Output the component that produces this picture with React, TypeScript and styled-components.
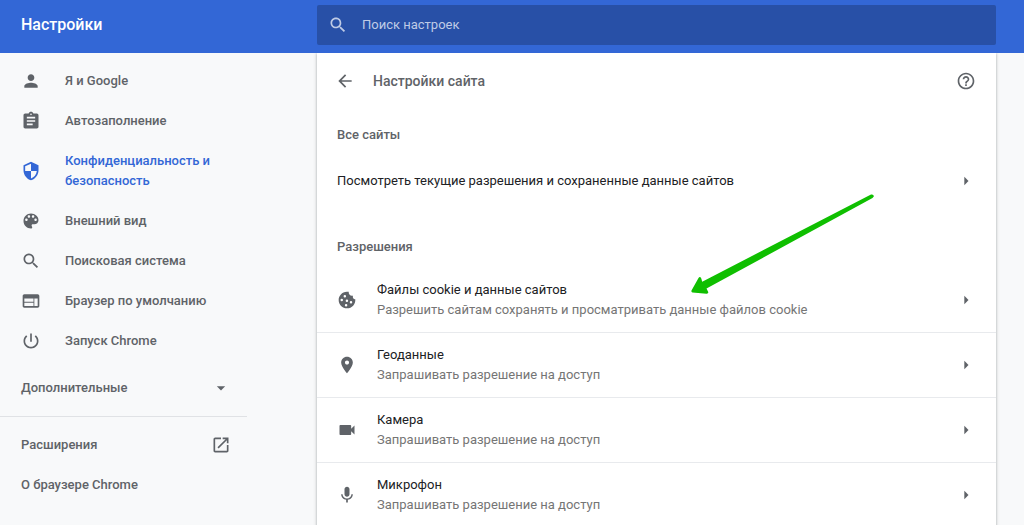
import React from "react";
import styled, { createGlobalStyle } from "styled-components";

const GlobalStyle = createGlobalStyle`
  *, *::before, *::after { box-sizing: border-box; }
  body {
    margin: 0;
    background: #f8f9fa;
    color: #202124;
    font-family: Roboto, "Liberation Sans", sans-serif;
    font-size: 13px;
    line-height: 20px;
  }
  h1, h2, p, ul { margin: 0; padding: 0; }
  ul { list-style: none; }
  button { border: 0; padding: 0; background: none; font: inherit; color: inherit; text-align: left; cursor: pointer; }
  a { color: inherit; text-decoration: none; }
`;

const icons = {
  person:
    "M12 12c2.21 0 4-1.79 4-4s-1.79-4-4-4-4 1.79-4 4 1.79 4 4 4zm0 2c-2.67 0-8 1.34-8 4v2h16v-2c0-2.66-5.33-4-8-4z",
  assignment:
    "M19 3h-4.18C14.4 1.84 13.3 1 12 1c-1.3 0-2.4.84-2.82 2H5c-1.1 0-2 .9-2 2v14c0 1.1.9 2 2 2h14c1.1 0 2-.9 2-2V5c0-1.1-.9-2-2-2zm-7 0c.55 0 1 .45 1 1s-.45 1-1 1-1-.45-1-1 .45-1 1-1zm2 14H7v-2h7v2zm3-4H7v-2h10v2zm0-4H7V7h10v2z",
  security:
    "M12 1L3 5v6c0 5.55 3.84 10.74 9 12 5.16-1.26 9-6.45 9-12V5l-9-4zm0 10.99h7c-.53 4.12-3.28 7.79-7 8.94V12H5V6.3l7-3.11v8.8z",
  palette:
    "M12 3c-4.97 0-9 4.03-9 9s4.03 9 9 9c.83 0 1.5-.67 1.5-1.5 0-.39-.15-.74-.39-1.01-.23-.26-.38-.61-.38-.99 0-.83.67-1.5 1.5-1.5H16c2.76 0 5-2.24 5-5 0-4.42-4.03-8-9-8zm-5.5 9c-.83 0-1.5-.67-1.5-1.5S5.67 9 6.500 9 8 9.670 8 10.500 7.330 12 6.500 12zm3-4C8.670 8 8 7.330 8 6.500S8.670 5 9.500 5s1.500.670 1.500 1.500S10.330 8 9.500 8zm5 0c-.830 0-1.500-.670-1.500-1.500S13.670 5 14.500 5s1.500.670 1.500 1.500S15.330 8 14.500 8zm3 4c-.830 0-1.500-.670-1.500-1.500S16.670 9 17.500 9s1.500.670 1.500 1.500-.670 1.500-1.500 1.500z",
  search:
    "M15.5 14h-.79l-.28-.27C15.41 12.59 16 11.11 16 9.5 16 5.91 13.09 3 9.5 3S3 5.91 3 9.5 5.91 16 9.5 16c1.61 0 3.09-.59 4.23-1.57l.27.28v.79l5 4.99L20.49 19l-4.99-5zm-6 0C7.01 14 5 11.99 5 9.5S7.01 5 9.5 5 14 7.01 14 9.5 11.99 14 9.5 14z",
  web: "M20 4H4c-1.1 0-1.99.9-1.99 2L2 18c0 1.1.9 2 2 2h16c1.1 0 2-.9 2-2V6c0-1.1-.9-2-2-2zm-5 14H4v-4h11v4zm0-5H4V9h11v4zm5 5h-4V9h4v9z",
  power:
    "M13 3h-2v10h2V3zm4.83 2.17l-1.42 1.42C17.99 7.86 19 9.81 19 12c0 3.87-3.13 7-7 7s-7-3.13-7-7c0-2.19 1.01-4.14 2.58-5.42L6.17 5.17C4.23 6.82 3 9.26 3 12c0 4.97 4.03 9 9 9s9-4.03 9-9c0-2.74-1.23-5.18-3.17-6.83z",
  down: "M7 10l5 5 5-5z",
  right: "M10 17l5-5-5-5z",
  launch:
    "M19 19H5V5h7V3H5c-1.11 0-2 .9-2 2v14c0 1.1.89 2 2 2h14c1.1 0 2-.9 2-2v-7h-2v7zM14 3v2h3.59l-9.83 9.83 1.41 1.41L19 6.41V10h2V3h-7z",
  back: "M20 11H7.83l5.59-5.59L12 4l-8 8 8 8 1.41-1.41L7.83 13H20v-2z",
  help: "M11 18h2v-2h-2v2zm1-16C6.48 2 2 6.48 2 12s4.48 10 10 10 10-4.48 10-10S17.52 2 12 2zm0 18c-4.41 0-8-3.59-8-8s3.59-8 8-8 8 3.59 8 8-3.59 8-8 8zm0-14c-2.21 0-4 1.79-4 4h2c0-1.1.9-2 2-2s2 .9 2 2c0 2-3 1.750-3 5h2c0-2.250 3-2.500 3-5 0-2.210-1.790-4-4-4z",
  cookie:
    "M21.95 10.990c-1.790-.030-3.700-1.950-2.680-4.220-2.980 1-5.770-1.590-5.190-4.560C6.950.710 2 6.580 2 12c0 5.520 4.480 10 10 10 5.890 0 10.540-5.080 9.950-11.010zM9.400 8.900a1.500 1.500 0 1 1 0-3 1.500 1.500 0 0 1 0 3zM5.700 13.400a1.500 1.500 0 1 1 0-3 1.500 1.500 0 0 1 0 3zM11.900 14.300a1.500 1.500 0 1 1 0-3 1.500 1.500 0 0 1 0 3zM16.800 16.200a1.500 1.500 0 1 1 0-3 1.500 1.500 0 0 1 0 3zM10.900 19.900a1.500 1.500 0 1 1 0-3 1.500 1.500 0 0 1 0 3z",
  place:
    "M12 2C8.130 2 5 5.130 5 9c0 5.250 7 13 7 13s7-7.750 7-13c0-3.870-3.130-7-7-7zm0 9.500c-1.380 0-2.500-1.120-2.500-2.500s1.120-2.500 2.500-2.500 2.500 1.120 2.500 2.500-1.120 2.500-2.500 2.500z",
  camera:
    "M17 10.500V7c0-.550-.450-1-1-1H4c-.550 0-1 .450-1 1v10c0 .550.450 1 1 1h12c.550 0 1-.450 1-1v-3.500l4 4v-11l-4 4z",
  mic: "M12 14c1.660 0 2.990-1.340 2.990-3L15 5c0-1.660-1.340-3-3-3S9 3.340 9 5v6c0 1.660 1.340 3 3 3zm5.300-3c0 3-2.540 5.100-5.300 5.100S6.700 14 6.700 11H5c0 3.410 2.720 6.230 6 6.720V21h2v-3.280c3.280-.480 6-3.300 6-6.720h-1.700z",
};

type IconName = keyof typeof icons;

const IconSvg = styled.svg`
  flex: none;
  width: 20px;
  height: 20px;
  fill: currentColor;
`;

const Icon = ({ name }: { name: IconName }) => (
  <IconSvg viewBox="0 0 24 24" aria-hidden="true">
    <path d={icons[name]} />
  </IconSvg>
);

const Shell = styled.div`
  display: flex;
  flex-direction: column;
  height: 100vh;
`;

const Toolbar = styled.header`
  display: grid;
  grid-template-columns: 317px minmax(0, 1fr);
  flex: none;
  padding: 5px 28px 8px 0;
  background: #3367d6;
  color: #fff;
`;

const AppTitle = styled.h1`
  padding-left: 21px;
  font-size: 16px;
  font-weight: 500;
  line-height: 40px;
`;

const SearchBox = styled.label`
  display: flex;
  align-items: center;
  gap: 14px;
  height: 40px;
  padding: 0 11px;
  border-radius: 2px;
  background: #2850a7;
  color: #bfcbe6;
`;

const SearchInput = styled.input`
  flex: 1;
  min-width: 0;
  padding: 0;
  border: 0;
  outline: 0;
  background: transparent;
  color: #fff;
  font: inherit;
  &::placeholder { color: #bfcbe6; opacity: 1; }
`;

const Body = styled.div`
  display: grid;
  grid-template-columns: 317px minmax(0, 1fr);
  flex: 1;
  min-height: 0;
  padding-right: 28px;
  overflow-y: auto;
  scrollbar-width: none;
`;

const Sidebar = styled.nav`
  width: 247px;
  padding-top: 8px;
  color: #5f6368;
  font-weight: 500;
`;

const NavLink = styled.a<{ $active?: boolean }>`
  display: flex;
  align-items: center;
  gap: 24px;
  padding: 10px 16px 10px 21px;
  color: ${(p) => (p.$active ? "#3367d6" : "inherit")};
`;

const MoreButton = styled.button`
  display: flex;
  align-items: center;
  justify-content: space-between;
  width: 100%;
  height: 40px;
  margin: 7px 0 8px;
  padding: 0 16px 0 21px;
  font-weight: 500;
`;

const Footer = styled.ul`
  padding-top: 8px;
  border-top: 1px solid #e0e2e5;
`;

const FooterLink = styled.a`
  display: flex;
  align-items: center;
  justify-content: space-between;
  padding: 10px 16px 10px 21px;
`;

const Card = styled.main`
  min-height: max-content;
  background: #fff;
  box-shadow: 0 1px 2px rgba(60, 64, 67, 0.3), 0 1px 3px 1px rgba(60, 64, 67, 0.15);
`;

const CardHeader = styled.div`
  display: flex;
  align-items: center;
  gap: 18px;
  height: 56px;
  padding: 0 20px 0 18px;
  color: #5f6368;
`;

const IconButton = styled.button`
  display: flex;
  color: #5f6368;
`;

const CardTitle = styled.h2`
  flex: 1;
  font-size: 14px;
  font-weight: 500;
`;

const SectionTitle = styled.h2`
  padding: 16px 20px 10px;
  color: #5f6368;
  font-size: 13px;
  font-weight: 500;
  line-height: 20px;
`;

const LinkRow = styled.button`
  display: flex;
  align-items: center;
  justify-content: space-between;
  width: 100%;
  min-height: 52px;
  padding: 0 20px;
`;

const Chevron = styled.span`
  display: flex;
  margin-left: auto;
  color: #5f6368;
`;

const Permissions = styled.section`
  position: relative;
  padding-top: 14px;
`;

const PermissionItem = styled.li`
  border-top: 1px solid #e8eaed;
  &:first-child { border-color: transparent; }
`;

const PermissionButton = styled.button`
  display: flex;
  align-items: center;
  gap: 20px;
  width: 100%;
  height: 64px;
  padding: 0 20px;
  color: #5f6368;
`;

const PermissionText = styled.span`
  display: grid;
`;

const PermissionName = styled.span`
  color: #202124;
`;

const PermissionState = styled.span`
  color: #757575;
`;

const Pointer = styled.svg`
  position: absolute;
  top: -15px;
  right: 120px;
  width: 186px;
  height: 104px;
  fill: #0fbf00;
  pointer-events: none;
`;

const navItems: { icon: IconName; label: string; active?: boolean }[] = [
  { icon: "person", label: "Я и Google" },
  { icon: "assignment", label: "Автозаполнение" },
  { icon: "security", label: "Конфиденциальность и безопасность", active: true },
  { icon: "palette", label: "Внешний вид" },
  { icon: "search", label: "Поисковая система" },
  { icon: "web", label: "Браузер по умолчанию" },
  { icon: "power", label: "Запуск Chrome" },
];

const ask = "Запрашивать разрешение на доступ";

const permissions: { icon: IconName; name: string; state: string }[] = [
  {
    icon: "cookie",
    name: "Файлы cookie и данные сайтов",
    state: "Разрешить сайтам сохранять и просматривать данные файлов cookie",
  },
  { icon: "place", name: "Геоданные", state: ask },
  { icon: "camera", name: "Камера", state: ask },
  { icon: "mic", name: "Микрофон", state: ask },
];

export default function App() {
  return (
    <Shell>
      <GlobalStyle />
      <Toolbar>
        <AppTitle>Настройки</AppTitle>
        <SearchBox>
          <Icon name="search" />
          <SearchInput type="search" aria-label="Поиск настроек" placeholder="Поиск настроек" />
        </SearchBox>
      </Toolbar>
      <Body>
        <Sidebar>
          <ul>
            {navItems.map((item) => (
              <li key={item.icon}>
                <NavLink href="#" $active={item.active} aria-current={item.active ? "page" : undefined}>
                  <Icon name={item.icon} />
                  <span>{item.label}</span>
                </NavLink>
              </li>
            ))}
          </ul>
          <MoreButton type="button" aria-expanded={false}>
            Дополнительные
            <Icon name="down" />
          </MoreButton>
          <Footer>
            <li>
              <FooterLink href="#">
                Расширения
                <Icon name="launch" />
              </FooterLink>
            </li>
            <li>
              <FooterLink href="#">О браузере Chrome</FooterLink>
            </li>
          </Footer>
        </Sidebar>
        <Card>
          <CardHeader>
            <IconButton type="button" aria-label="Назад">
              <Icon name="back" />
            </IconButton>
            <CardTitle>Настройки сайта</CardTitle>
            <IconButton type="button" aria-label="Справка">
              <Icon name="help" />
            </IconButton>
          </CardHeader>
          <section>
            <SectionTitle>Все сайты</SectionTitle>
            <LinkRow type="button">
              Посмотреть текущие разрешения и сохраненные данные сайтов
              <Chevron>
                <Icon name="right" />
              </Chevron>
            </LinkRow>
          </section>
          <Permissions>
            <SectionTitle>Разрешения</SectionTitle>
            <ul>
              {permissions.map((item) => (
                <PermissionItem key={item.icon}>
                  <PermissionButton type="button">
                    <Icon name={item.icon} />
                    <PermissionText>
                      <PermissionName>{item.name}</PermissionName>
                      <PermissionState>{item.state}</PermissionState>
                    </PermissionText>
                    <Chevron>
                      <Icon name="right" />
                    </Chevron>
                  </PermissionButton>
                </PermissionItem>
              ))}
            </ul>
            <Pointer viewBox="690 192 186 104" aria-hidden="true">
              <path d="M691.500 290.500L698.500 278Q700 276 701.300 278.500L702.200 281.700L871 194.500Q874 194 873.800 196.500L872.500 198L706.500 288.500L708 291.500Q709 293.800 706.500 293.700L692.500 292.500Q691 292 691.500 290.500Z" />
            </Pointer>
          </Permissions>
        </Card>
      </Body>
    </Shell>
  );
}
